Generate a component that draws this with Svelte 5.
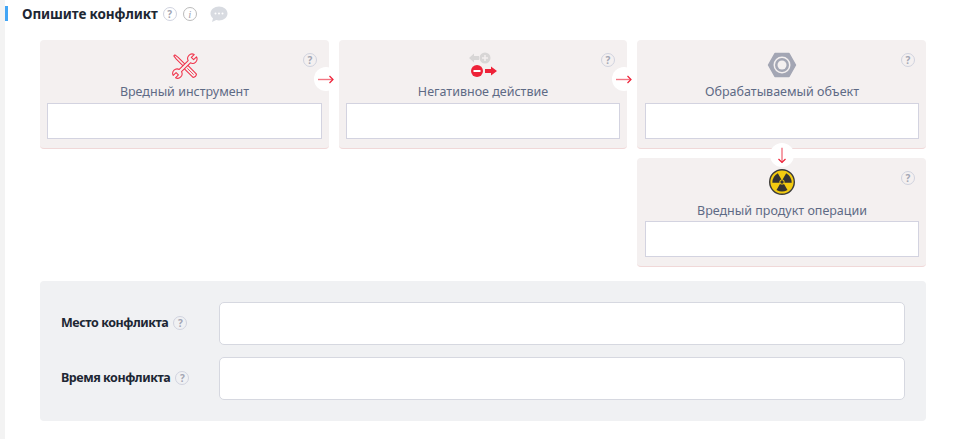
<script>
  const help = [
    { title: 'Вредный инструмент', icon: 'tools', arrow: 'right' },
    { title: 'Негативное действие', icon: 'action', arrow: 'right' },
    { title: 'Обрабатываемый объект', icon: 'nut', arrow: 'down' }
  ];
  const rows = ['Место конфликта', 'Время конфликта'];
  const blades = [0, 120, 240];
</script>

{#snippet q()}
  <span class="q">?</span>
{/snippet}

{#snippet icon(name)}
  {#if name === 'tools'}
    <svg class="low" width="26" height="26" viewBox="-1 -1 32 32" fill="#f4f0f0" stroke="#f0324a" stroke-width="1.300" stroke-linejoin="round">
      <g transform="rotate(-45 15 15)">
        <path d="M14 -3.500h2l.6 5v14h-3.200v-14z" />
        <path d="M12.500 16h5l.5 1v15q-3 2.500-6 0V17z" />
        <path d="M15 19v11" stroke-width="1" />
      </g>
      <g transform="rotate(45 15 15)">
        <path d="M13 -3v5h4v-5a5.500 5.500 0 0 1 0 10.500v15.500a5.500 5.500 0 0 1 0 10.500v-5h-4v5a5.500 5.500 0 0 1 0-10.500V7.500a5.500 5.500 0 0 1 0-10.500z" />
      </g>
    </svg>
  {:else if name === 'action'}
    <svg width="30" height="30" viewBox="0 0 30 30">
      <circle cx="17" cy="9" r="5.500" fill="#d8d6d6" />
      <path d="M14 9h6M17 6v6" stroke="#f4f0f0" stroke-width="1.500" />
      <path d="M1 9l5-4.500V7h5v4H6v2.500z" fill="#d8d6d6" />
      <circle cx="9" cy="22" r="6" fill="#ee2238" />
      <path d="M5.500 22h7" stroke="#fff" stroke-width="2" />
      <path d="M17 20h6v-2.500l6 4.500-6 4.500V24h-6z" fill="#ee2238" />
    </svg>
  {:else if name === 'nut'}
    <svg class="nudge" width="30" height="30" viewBox="0 0 30 30">
      <path d="M1.500 15 8 3.500h14L28.500 15 22 26.500H8z" fill="#a3a6b4" stroke="#a3a6b4" stroke-width="1.500" stroke-linejoin="round" />
      <circle cx="15" cy="15" r="8.500" fill="#f4f0f0" />
      <circle cx="15" cy="15" r="7" fill="#a3a6b4" />
      <circle cx="15" cy="15" r="4.500" fill="#f4f0f0" />
    </svg>
  {:else}
    <svg width="26" height="26" viewBox="0 0 26 26">
      <circle cx="13" cy="13" r="12.300" fill="#f3cb10" stroke="#3b3b3b" stroke-width="1.400" />
      {#each blades as a}
        <path d="M13 13 7.500 3.500a11 11 0 0 1 11 0z" fill="#333" transform="rotate({a + 60} 13 13) translate(0 1.500)" />
      {/each}
      <circle cx="13" cy="13" r="2.600" fill="#f3cb10" />
      <circle cx="13" cy="13" r="1.700" fill="#333" />
    </svg>
  {/if}
{/snippet}

{#snippet arrow()}
  <svg width="16" height="9" viewBox="0 0 16 9" fill="none">
    <path d="M0 4.500h15" stroke="#f27582" stroke-width="1.400" />
    <path d="M11.500 1l3.500 3.500L11.500 8" stroke="#ee2238" stroke-width="1.200" />
  </svg>
{/snippet}

<div class="page">
  <h2 class="head">
    Опишите конфликт
    {@render q()}
    <span class="i">i</span>
    <svg class="chat" width="18" height="17" viewBox="0 0 18 17">
      <path d="M9 0.500c4.700 0 8.500 3 8.500 7s-3.800 7-8.500 7q-1.500 0-2.800-.4L2 16l1-3.700C1.300 11 .5 9.400.5 7.500c0-4 3.800-7 8.500-7z" fill="#d8dbe1" />
      <circle cx="5.500" cy="7.500" r="1" fill="#fff" />
      <circle cx="9" cy="7.500" r="1" fill="#fff" />
      <circle cx="12.500" cy="7.500" r="1" fill="#fff" />
    </svg>
  </h2>

  <div class="chain">
    {#each help as c}
      <div class="card" class:third={c.arrow === 'down'}>
        <div class="hint">{@render q()}</div>
        <div class="pic">{@render icon(c.icon)}</div>
        <div class="title">{c.title}</div>
        <div class="box"></div>
        <span class="link {c.arrow}">{@render arrow()}</span>
      </div>
    {/each}
    <div class="card third last">
      <div class="hint">{@render q()}</div>
      <div class="pic">{@render icon('radiation')}</div>
      <div class="title">Вредный продукт операции</div>
      <div class="box"></div>
    </div>
  </div>

  <div class="panel">
    {#each rows as r}
      <div class="row">
        <div class="label">{r} {@render q()}</div>
        <div class="field"></div>
      </div>
    {/each}
  </div>
</div>

<style>
:global(body){margin:0;background:#fff}
.page{box-sizing:border-box;width:926px;height:439px;padding:6px 0 0 35px;border-left:5px solid #f3f3f3;
  font-family:"Noto Sans",sans-serif;position:relative}
.head{position:relative;margin:0 0 0 -18px;height:16px;display:flex;align-items:center;gap:5px;font-size:13.500px;line-height:16px;font-weight:700;color:#1d2733;letter-spacing:-.1px}
.head::before{content:"";position:absolute;left:-17px;top:0;width:3px;height:15px;background:#42a5f5}
.q,.i{display:inline-flex;align-items:center;justify-content:center;box-sizing:border-box;width:14px;height:14px;border:1px solid #d0d3df;border-radius:50%;
  font-size:10px;line-height:1;font-weight:700;color:#a3a6b3;background:transparent;letter-spacing:0}
.i{font-family:"Liberation Serif",serif;font-style:italic;font-weight:400;font-size:11px;border-color:#bbb;margin-left:1px}
.chat{margin-left:8px}
.chain{display:grid;grid-template-columns:289px 288px 289px;column-gap:10px;row-gap:9px;margin-top:18px;width:886px}
.card{position:relative;box-sizing:border-box;height:109px;padding:9px 7px;background:#f4f0f0;border-radius:4px;border-bottom:1px solid #f0d8d8;
  display:flex;flex-direction:column;align-items:center}
.third{padding-left:8px}
.last{grid-column:3}
.last .title{margin-top:5px}
.pic{height:30px;display:flex;align-items:center;justify-content:center}
.low{margin-top:3px}
.nudge{margin-top:1px}
.title{margin-top:4px;font-size:12.500px;line-height:18px;color:#5e6a85}
.box{box-sizing:border-box;width:100%;height:36px;margin-top:auto;background:#fff;border:1px solid #d3d3e0}
.hint{position:absolute;right:12px;top:13px;display:flex}
.third .hint{right:11px}
.link{position:absolute;z-index:1;display:flex;align-items:center;justify-content:center;width:24px;height:24px;border-radius:50%;background:#fff}
.right{right:-9px;top:27px}
.down{left:50%;bottom:-19px;margin-left:-12px}
.down svg{transform:rotate(90deg)}
.panel{box-sizing:border-box;width:886px;height:140px;margin-top:14px;padding:21px;background:#f0f1f3;border-radius:4px;display:flex;flex-direction:column;gap:12px}
.row{display:flex;align-items:center;height:43px}
.label{width:158px;display:flex;align-items:center;gap:5px;margin-top:-2px;font-size:12.500px;font-weight:700;color:#1d2733;letter-spacing:-.45px}
.label .q{letter-spacing:0}
.field{flex:1;height:43px;box-sizing:border-box;background:#fff;border:1px solid #d6d8e0;border-radius:5px}
</style>
